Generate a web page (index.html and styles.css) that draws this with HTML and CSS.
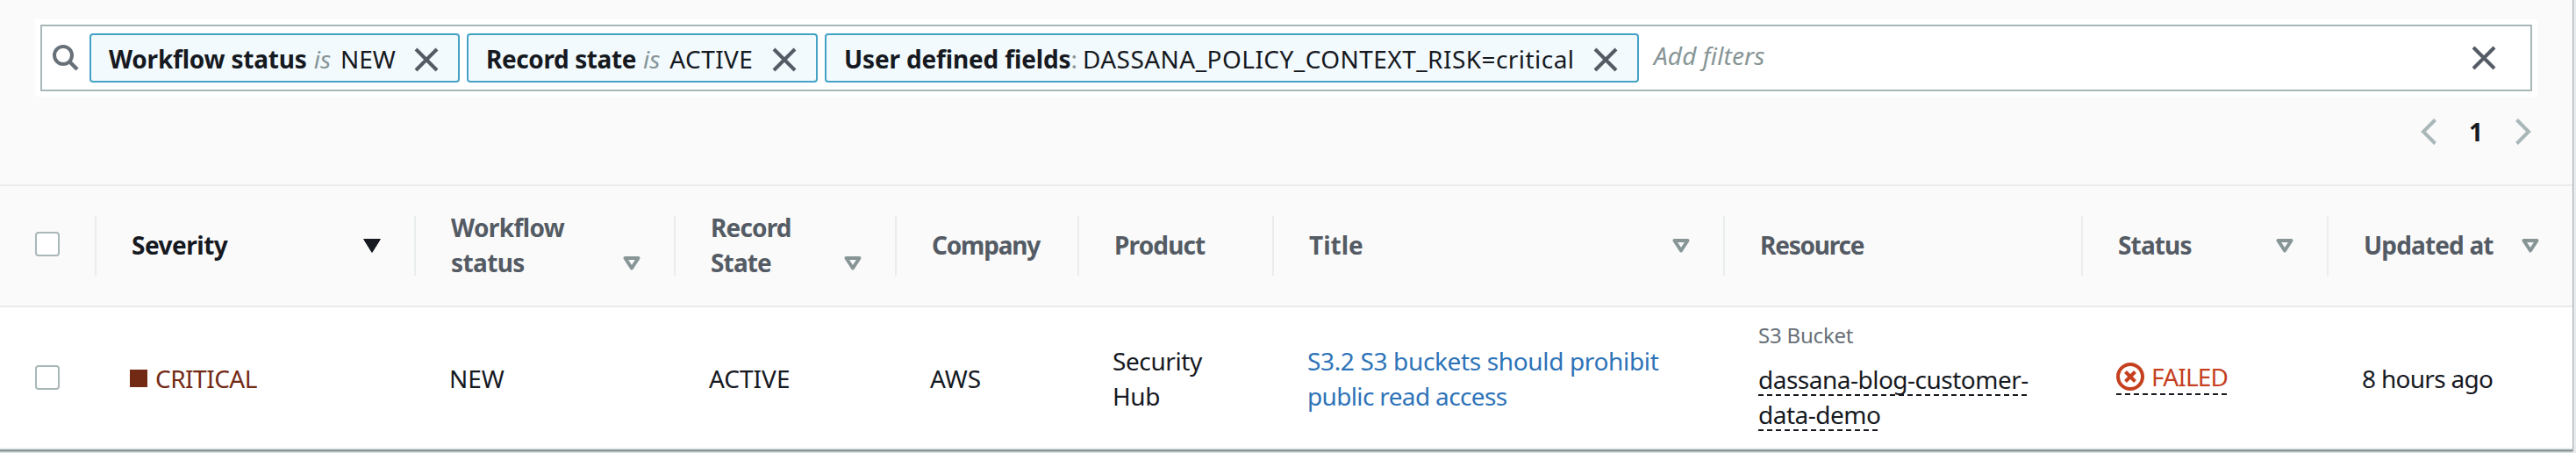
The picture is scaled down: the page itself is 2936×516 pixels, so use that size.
FILE: index.html
```html
<!DOCTYPE html>
<html lang="en">
<head>
<meta charset="utf-8">
<title>Findings</title>
<link rel="stylesheet" href="styles.css">
</head>
<body>
<svg class="defs" aria-hidden="true">
  <symbol id="x" viewBox="0 0 28 28"><path d="M2 2L26 26M26 2L2 26" fill="none" stroke="currentColor" stroke-width="4"/></symbol>
  <symbol id="tri" viewBox="0 0 20 16"><path d="M2.5 2H17.5L10 13.5Z" fill="none" stroke="currentColor" stroke-width="4" stroke-linejoin="round"/></symbol>
</svg>
<main class="panel">
  <div class="search-wrap">
    <div class="search">
      <svg class="magnifier" viewBox="0 0 30 30"><circle cx="12" cy="12" r="10" fill="none" stroke="currentColor" stroke-width="4"/><path d="M19 19L28 28" stroke="currentColor" stroke-width="4.4"/></svg>
      <div class="tokens">
        <div class="token token-workflow"><b>Workflow status</b><i>is</i><span>NEW</span><svg class="x"><use href="#x"/></svg></div>
        <div class="token token-record"><b>Record state</b><i>is</i><span>ACTIVE</span><svg class="x"><use href="#x"/></svg></div>
        <div class="token token-fields"><b>User defined fields</b><em>:</em><span>DASSANA_POLICY_CONTEXT_RISK=critical</span><svg class="x"><use href="#x"/></svg></div>
      </div>
      <div class="placeholder">Add filters</div>
      <svg class="x clear"><use href="#x"/></svg>
    </div>
  </div>
  <nav class="pager">
    <svg class="chevron" viewBox="0 0 18 30"><path d="M16.5 1.5L3 15L16.5 28.500" fill="none" stroke="currentColor" stroke-width="4"/></svg>
    <b>1</b>
    <svg class="chevron" viewBox="0 0 18 30"><path d="M1.500 1.500L15 15L1.500 28.500" fill="none" stroke="currentColor" stroke-width="4"/></svg>
  </nav>
  <div class="grid head">
    <div class="th check"><span class="box"></span></div>
    <div class="th sorted"><span>Severity</span><svg class="tri filled"><use href="#tri"/></svg></div>
    <div class="th two"><span class="workflow">Workflow<br>status</span><svg class="tri"><use href="#tri"/></svg></div>
    <div class="th two"><span class="tight">Record<br>State</span><svg class="tri"><use href="#tri"/></svg></div>
    <div class="th"><span class="tighter">Company</span></div>
    <div class="th"><span class="tight">Product</span></div>
    <div class="th"><span class="title">Title</span><svg class="tri"><use href="#tri"/></svg></div>
    <div class="th"><span class="tighter">Resource</span></div>
    <div class="th"><span class="tight">Status</span><svg class="tri"><use href="#tri"/></svg></div>
    <div class="th"><span class="tight">Updated at</span><svg class="tri"><use href="#tri"/></svg></div>
  </div>
  <div class="grid row">
    <div class="check"><span class="box"></span></div>
    <div class="td critical"><span class="square"></span>CRITICAL</div>
    <div class="td new">NEW</div>
    <div class="td active">ACTIVE</div>
    <div class="td aws">AWS</div>
    <div class="td product">Security<br>Hub</div>
    <div class="td link"><span class="line1">S3.2 S3 buckets should prohibit</span><br><span class="line2">public read access</span></div>
    <div class="td resource"><div class="kind">S3 Bucket</div><div><span class="dashed">dassana-blog-customer-<br>data-demo</span></div></div>
    <div class="td"><span class="failed"><svg class="fail-icon" viewBox="0 0 32 32"><circle cx="16" cy="16" r="14" fill="none" stroke="currentColor" stroke-width="4"/><path d="M10.500 10.500L21.500 21.500M21.500 10.500L10.500 21.500" stroke="currentColor" stroke-width="4"/></svg>FAILED</span></div>
    <div class="td ago">8 hours ago</div>
  </div>
</main>
</body>
</html>
```
FILE: styles.css
```css
* { box-sizing: border-box; }
body {
  margin: 0;
  height: 516px;
  background: #e9ebed;
  color: #16191f;
  font: 28px/40px "Noto Sans", "Open Sans", sans-serif;
  overflow: hidden;
}
svg { display: block; flex: none; }
.defs { position: absolute; width: 0; height: 0; }
.panel {
  width: 2932px;
  height: 514px;
  background: #fafafa;
  border-bottom: 2px solid #879596;
  box-shadow: 1px 0 1px #a9b0b1, 0 1px 1px #bcc3c4;
}
.search-wrap { display: flow-root; padding: 22px 40px 0; }
.search {
  display: flex;
  align-items: center;
  height: 76px;
  margin: 6px;
  padding: 0 39px 0 12px;
  background: #fff;
  border: 2px solid #aab7b8;
  box-shadow: 0 0 0 6px #fff;
}
.magnifier { width: 30px; height: 30px; color: #687078; }
.tokens { display: flex; gap: 8px; margin-left: 12px; }
.token {
  display: flex;
  align-items: center;
  height: 56px;
  padding: 0 22px 0 20px;
  background: #f2fafd;
  border: 2px solid #44a2c7;
  border-radius: 4px;
  white-space: nowrap;
}
.token > :not(svg) { position: relative; top: 1px; }
.token i { margin: 0 11px 0 8px; color: #879596; }
.token em { margin: 0 6px 0 0; color: #879596; font-style: normal; }
.token .x { margin-left: auto; position: relative; top: 2px; }
.x { width: 28px; height: 28px; color: #545b64; }
.token-workflow { width: 422px; }
.token-workflow b { letter-spacing: -0.2px; }
.token-record { width: 400px; }
.token-record b { letter-spacing: -0.4px; }
.token-record span { letter-spacing: 0.4px; }
.token-fields { width: 928px; }
.token-fields b { letter-spacing: -0.15px; }
.token-fields span { letter-spacing: 0.45px; }
.placeholder {
  margin: -6px 0 0 17px;
  color: #879596;
  font-style: italic;
  letter-spacing: 0.1px;
}
.clear { margin-left: auto; }
.pager {
  display: flex;
  align-items: center;
  justify-content: flex-end;
  height: 80px;
  padding-right: 47px;
}
.pager b { width: 90px; text-align: center; }
.chevron { width: 18px; height: 30px; color: #aab7b8; }
.grid {
  display: grid;
  grid-template-columns: 110px 364px 296px 252px 208px 222px 514px 408px 280px 278px;
  align-items: center;
}
.head {
  height: 140px;
  margin-top: 20px;
  border-top: 2px solid #ebebeb;
  border-bottom: 2px solid #ebebeb;
}
.th {
  display: flex;
  align-items: center;
  justify-content: space-between;
  height: 68px;
  padding: 0 38px 0 40px;
  border-right: 2px solid #eaeded;
  color: #545b64;
  font-weight: 700;
  letter-spacing: -0.5px;
  white-space: nowrap;
}
.th:last-child { border-right: 0; }
.th > span { margin-top: -2px; }
.th .tight { letter-spacing: -0.85px; }
.th .tighter { letter-spacing: -1.2px; }
.th .title { letter-spacing: 0; }
.th .workflow { letter-spacing: -0.6px; }
.tri { width: 20px; height: 16px; color: #879596; }
.sorted, .sorted .tri { color: #16191f; }
.filled { background: #16191f; clip-path: polygon(0 0, 100% 0, 50% 100%); }
.two .tri { margin-top: 40px; }
.check { padding: 0 0 0 40px; }
.box {
  display: block;
  width: 28px;
  height: 28px;
  background: #fff;
  border: 2px solid #aab7b8;
  border-radius: 4px;
}
.th > .box { margin: -4px 0 0; }
.row {
  height: 162px;
  background: #fff;
  border-bottom: 2px solid #eaeded;
}
.td { padding: 2px 0 0 38px; white-space: nowrap; }
.critical {
  display: flex;
  align-items: center;
  color: #732a14;
  letter-spacing: -0.5px;
}
.square { width: 20px; height: 20px; margin-right: 9px; background: #732a14; }
.product { letter-spacing: -0.4px; }
.link { color: #2e73b8; }
.line1 { letter-spacing: -0.35px; }
.line2 { letter-spacing: -0.65px; }
.resource { padding-bottom: 3px; }
.kind { margin-bottom: 15px; color: #687078; font-size: 24px; line-height: 30px; letter-spacing: -0.2px; }
.dashed, .failed {
  background: repeating-linear-gradient(90deg, #16191f 0 6px, transparent 6px 10px) 0 100% / 100% 2px no-repeat;
  -webkit-box-decoration-break: clone;
  box-decoration-break: clone;
}
.dashed { letter-spacing: -0.5px; }
.failed {
  display: inline-flex;
  align-items: center;
  height: 42px;
  color: #c5401f;
  letter-spacing: -0.8px;
}
.fail-icon { width: 32px; height: 32px; margin-right: 8px; }
.ago { letter-spacing: -0.7px; }
```
